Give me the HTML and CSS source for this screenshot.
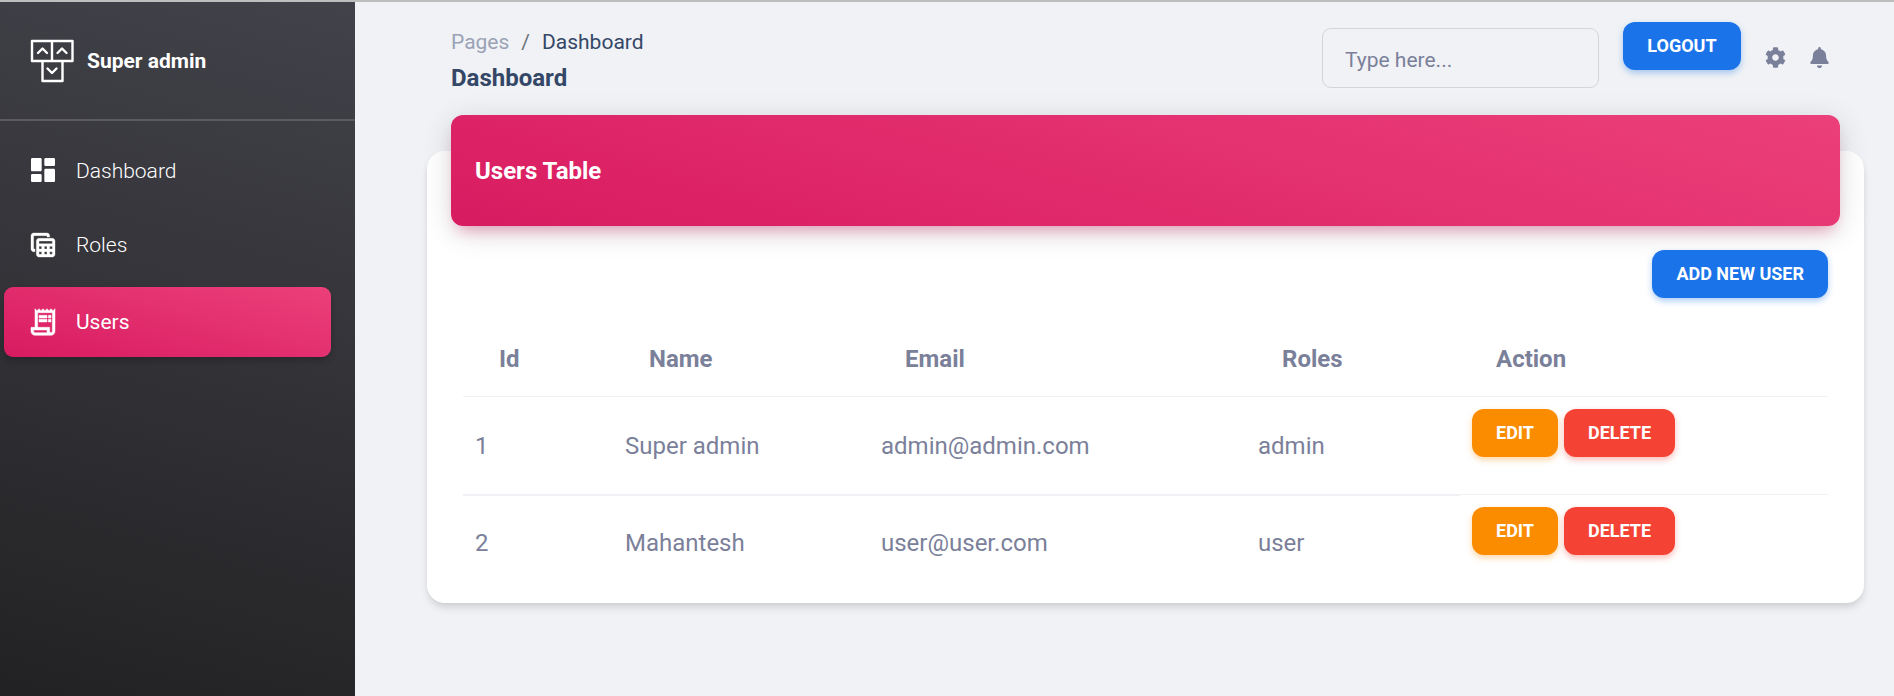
FILE: index.html
```html
<!DOCTYPE html>
<html lang="en">
<head>
<meta charset="utf-8">
<title>Dashboard</title>
<link rel="stylesheet" href="styles.css">
</head>
<body>
<div class="app">
  <aside class="sidebar">
    <div class="brand">
      <svg class="brand-logo" viewBox="0 0 46 46" fill="none" stroke="#fff" stroke-width="2.4" stroke-linejoin="round" stroke-linecap="round">
        <path d="M3 3H43.500V23H3ZM23 3V23M13.500 23V43H33.500V23"/>
        <path d="M9 15l4.500-4.500L18 15M28.500 15l4.500-4.500L37.500 15M18.500 30.500l4.500 4.500 4.500-4.500"/>
      </svg>
      <span>Super admin</span>
    </div>
    <nav class="nav">
      <a class="nav-item"><svg class="icon-raised" viewBox="0 0 24 24"><path d="M4 13h6c.55 0 1-.45 1-1V4c0-.55-.45-1-1-1H4c-.55 0-1 .45-1 1v8c0 .55.45 1 1 1zm0 8h6c.55 0 1-.45 1-1v-4c0-.55-.45-1-1-1H4c-.55 0-1 .45-1 1v4c0 .55.45 1 1 1zm10 0h6c.55 0 1-.45 1-1v-8c0-.55-.45-1-1-1h-6c-.55 0-1 .45-1 1v8c0 .55.45 1 1 1zM13 4v4c0 .55.45 1 1 1h6c.55 0 1-.45 1-1V4c0-.55-.45-1-1-1h-6c-.55 0-1 .45-1 1z"/></svg><span>Dashboard</span></a>
      <a class="nav-item"><svg viewBox="0 0 24 24"><path d="M19 7H9c-1.100 0-2 .9-2 2v10c0 1.100.9 2 2 2h10c1.100 0 2-.9 2-2V9c0-1.100-.9-2-2-2zm0 2v2H9V9h10zm-6 6v-2h2v2h-2zm2 2v2h-2v-2h2zm-4-2H9v-2h2v2zm6-2h2v2h-2v-2zm-8 4h2v2H9v-2zm8 2v-2h2v2h-2zM6 17H5c-1.100 0-2-.9-2-2V5c0-1.100.9-2 2-2h10c1.100 0 2 .9 2 2v1h-2V5H5v10h1v2z" stroke="#fff" stroke-width=".25"/></svg><span>Roles</span></a>
      <a class="nav-item active"><svg viewBox="0 0 24 24"><path d="M19.500 3.500L18 2l-1.500 1.500L15 2l-1.500 1.500L12 2l-1.500 1.500L9 2 7.500 3.500 6 2v14H3v3c0 1.660 1.340 3 3 3h12c1.660 0 3-1.340 3-3V2l-1.500 1.500zM15 20H6c-.55 0-1-.45-1-1v-1h10v2zm4-1c0 .55-.45 1-1 1s-1-.45-1-1v-3H8V5h11v14zM9 7h6v2H9zM16 7h2v2h-2zM9 10h6v2H9zM16 10h2v2h-2z" stroke="#fff" stroke-width=".35"/></svg><span>Users</span></a>
    </nav>
  </aside>
  <main class="main">
    <header class="topbar">
      <div class="heading">
        <div class="crumbs"><span class="crumb-parent">Pages</span><span class="crumb-sep">/</span><span class="crumb-current">Dashboard</span></div>
        <h1>Dashboard</h1>
      </div>
      <div class="tools">
        <input class="search" type="text" placeholder="Type here...">
        <button class="btn btn-info">Logout</button>
        <svg class="tool-icon cog" viewBox="0 0 512 512"><path d="M487.400 315.700l-42.600-24.600c4.300-23.200 4.300-47 0-70.200l42.600-24.600c4.900-2.800 7.100-8.600 5.500-14-11.100-35.600-30-67.800-54.700-94.600-3.800-4.100-10-5.100-14.800-2.300L380.800 110c-17.900-15.400-38.500-27.300-60.800-35.100V25.800c0-5.600-3.900-10.500-9.400-11.700-36.700-8.200-74.300-7.800-109.200 0-5.500 1.200-9.400 6.100-9.400 11.700V75c-22.200 7.900-42.800 19.800-60.800 35.100L88.700 85.500c-4.900-2.800-11-1.900-14.800 2.300-24.700 26.700-43.600 58.900-54.700 94.600-1.700 5.400.6 11.200 5.500 14L67.300 221c-4.300 23.200-4.300 47 0 70.200l-42.600 24.600c-4.900 2.800-7.100 8.600-5.500 14 11.100 35.600 30 67.800 54.700 94.600 3.800 4.100 10 5.100 14.800 2.300l42.600-24.600c17.900 15.400 38.500 27.300 60.800 35.100v49.200c0 5.600 3.900 10.500 9.400 11.700 36.700 8.200 74.300 7.800 109.200 0 5.500-1.200 9.400-6.100 9.400-11.700v-49.200c22.200-7.900 42.800-19.800 60.800-35.100l42.600 24.600c4.900 2.800 11 1.900 14.800-2.300 24.700-26.700 43.600-58.900 54.700-94.600 1.500-5.500-.7-11.300-5.600-14.100zM256 336c-44.100 0-80-35.900-80-80s35.900-80 80-80 80 35.900 80 80-35.900 80-80 80z"/></svg>
        <svg class="tool-icon bell" viewBox="0 0 448 512"><path d="M224 512c35.320 0 63.970-28.650 63.970-64H160.030c0 35.350 28.650 64 63.970 64zm215.390-149.710c-19.320-20.760-55.470-51.990-55.470-154.290 0-77.700-54.480-139.900-127.940-155.160V32c0-17.670-14.320-32-31.980-32s-31.980 14.330-31.980 32v20.840C118.560 68.100 64.080 130.300 64.080 208c0 102.300-36.150 133.530-55.470 154.290-6 6.450-8.660 14.160-8.610 21.710.11 16.400 12.980 32 32.100 32h383.800c19.120 0 32-15.600 32.100-32 .05-7.550-2.610-15.270-8.610-21.710z"/></svg>
      </div>
    </header>
    <section class="card">
      <h2 class="card-title">Users Table</h2>
      <div class="actions"><button class="btn btn-info">Add new user</button></div>
      <table class="users">
        <colgroup><col class="c-id"><col class="c-name"><col class="c-email"><col class="c-roles"><col></colgroup>
        <thead><tr><th>Id</th><th>Name</th><th>Email</th><th>Roles</th><th>Action</th></tr></thead>
        <tbody>
          <tr><td>1</td><td>Super admin</td><td>admin@admin.com</td><td>admin</td><td class="ops"><button class="btn btn-warning">Edit</button><button class="btn btn-danger">Delete</button></td></tr>
          <tr><td>2</td><td>Mahantesh</td><td>user@user.com</td><td>user</td><td class="ops"><button class="btn btn-warning">Edit</button><button class="btn btn-danger">Delete</button></td></tr>
        </tbody>
      </table>
    </section>
  </main>
</div>
</body>
</html>
```
FILE: styles.css
```css
* { box-sizing: border-box; }
body {
  margin: 0;
  height: 696px;
  overflow: hidden;
  background: #f0f2f5;
  border-top: 2px solid #bdbfbe;
  font-family: Roboto, "Liberation Sans", sans-serif;
  font-size: 24px;
  color: #7b809a;
}
h1, h2 { margin: 0; font-size: 24px; font-weight: 700; }
.app { display: flex; height: 694px; }

.sidebar {
  width: 355px;
  flex: none;
  background: linear-gradient(195deg, #42424a, #191919 128%);
  color: #fff;
  font-size: 21px;
}
.brand {
  display: flex;
  align-items: center;
  gap: 12px;
  height: 119px;
  padding: 1px 0 0 29px;
  border-bottom: 2px solid #5c5c60;
  font-weight: 700;
}
.brand-logo { width: 46px; height: 46px; }
.nav { display: flex; flex-direction: column; gap: 4px; padding: 15px 0 0 4px; }
.nav-item {
  display: flex;
  align-items: center;
  gap: 17px;
  width: 327px;
  height: 70px;
  padding-left: 23px;
  border-radius: 9px;
  font-weight: 300;
}
.nav-item svg { width: 32px; height: 32px; fill: #fff; }
.nav-item .icon-raised { margin-bottom: 2px; }
.nav-item.active {
  margin-top: 3px;
  background: linear-gradient(195deg, #ec407a, #d81b60);
  font-weight: 400;
  box-shadow: 0 4px 6px rgba(0, 0, 0, .2);
}

.main { flex: 1; padding: 20px 30px 0 72px; }
.topbar { display: flex; justify-content: space-between; height: 129px; padding: 0 35px 0 24px; }
.crumbs { display: flex; margin-top: 7px; line-height: 26px; font-size: 21px; }
.crumb-parent { color: #9aa3b5; }
.crumb-sep { padding: 0 12px; color: #6c757d; }
.crumb-current { color: #344767; }
h1 { margin-top: 8px; line-height: 30px; color: #344767; }
.tools { display: flex; align-items: flex-start; }
.tools .btn { width: 118px; }
.search {
  width: 277px;
  height: 60px;
  margin: 6px 24px 0 0;
  padding: 4px 22px 0;
  border: 1px solid #d2d6da;
  border-radius: 9px;
  background: none;
  font: inherit;
  font-size: 21px;
}
.search::placeholder { color: #7b809a; opacity: 1; }
.tool-icon { fill: #7b809a; height: 21px; margin-top: 25px; }
.cog { width: 21px; margin-left: 24px; }
.bell { width: 19px; margin-left: 24px; }

.btn {
  height: 48px;
  padding: 0 24px;
  border: 0;
  border-radius: 12px;
  font: 700 18px/1 Roboto, "Liberation Sans", sans-serif;
  text-transform: uppercase;
  color: #fff;
}
.btn-info { background: #1a73e8; box-shadow: 0 3px 6px rgba(26, 115, 232, .35); }
.btn-warning { background: #fb8c00; box-shadow: 0 3px 6px rgba(251, 140, 0, .35); }
.btn-danger { background: #f44335; box-shadow: 0 3px 6px rgba(244, 67, 53, .35); }

.card {
  display: flow-root;
  height: 452px;
  padding: 0 24px;
  border-radius: 18px;
  background: #fff;
  box-shadow: 0 6px 9px -1px rgba(0, 0, 0, .1), 0 3px 6px -1px rgba(0, 0, 0, .06);
}
.card-title {
  height: 111px;
  margin-top: -36px;
  padding-left: 24px;
  border-radius: 12px;
  line-height: 113px;
  color: #fff;
  background: linear-gradient(195deg, #ec407a, #d81b60);
  box-shadow: 0 6px 30px rgba(0, 0, 0, .14), 0 10px 15px -7px rgba(233, 30, 99, .4);
}
.actions { display: flex; justify-content: flex-end; padding: 24px 12px 0; }
.users { width: 1365px; margin: 22px 0 0 12px; border-collapse: separate; border-spacing: 0; table-layout: fixed; }
.c-id { width: 150px; }
.c-name { width: 256px; }
.c-email { width: 377px; }
.c-roles { width: 214px; }
th { height: 77px; padding: 2px 36px 0; border-bottom: 1px solid #f0f2f5; text-align: left; font-weight: 700; }
td { height: 98px; padding: 1px 12px 0; vertical-align: middle; }
tbody tr:first-child td { border-bottom: 1px solid #f0f2f5; }
tbody tr:last-child td { height: 95px; padding-top: 0; border-top: 1px solid #f0f2f5; }
tbody tr td.ops, tbody tr:last-child td.ops { padding-top: 12px; vertical-align: top; }
tbody tr:last-child td.ops { border-top: 0; }
.ops .btn + .btn { margin-left: 6px; }
```
